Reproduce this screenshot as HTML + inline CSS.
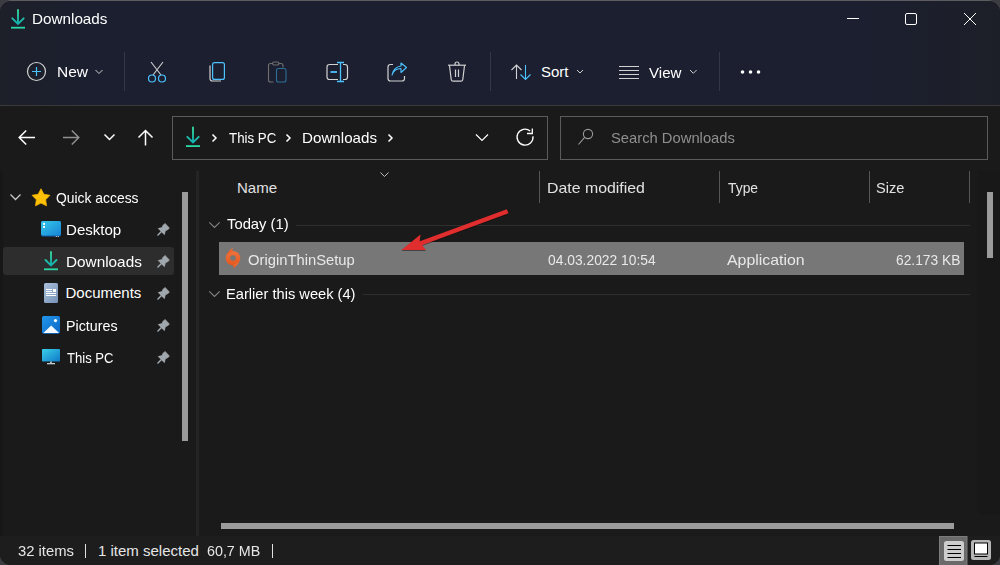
<!DOCTYPE html>
<html><head><meta charset="utf-8">
<style>
*{margin:0;padding:0;box-sizing:border-box}
html,body{width:1000px;height:565px;overflow:hidden;background:#3b3c41}
body{font-family:"Liberation Sans",sans-serif;font-size:15px;color:#fff;position:relative}
.t{position:absolute;white-space:pre;line-height:15px;height:15px;font-size:15px;transform-origin:0 0}
#frame{position:absolute;left:0;top:0;width:1000px;height:565px;border-radius:12px;background:#5d5d61}
#win{position:absolute;left:0;top:1px;width:1000px;height:564px;border-radius:11px;overflow:hidden;background:#1a1a1a}
#cmd{position:absolute;left:0;top:-1px;width:1000px;height:105px;background:linear-gradient(90deg,#1d2029 0%,#1b1f2f 9%,#1b1f30 50%,#1b1f2f 86%,#1d1f28 100%)}
#sep1{position:absolute;left:0;top:104px;width:1000px;height:1px;background:#3a3a3a}
#nav{position:absolute;left:0;top:105px;width:1000px;height:65px;background:#1a1a1a}
.vs{position:absolute;width:1px;background:#3b3f4c}
svg{position:absolute;overflow:visible}
.box{position:absolute;border:1px solid #5b5b5b;background:#1a1a1a}
.hd{color:#e2e2e2}
</style></head><body>
<div id="frame"></div>
<div id="win">
  <div id="cmd"></div>
  <div id="sep1"></div>
  <div id="nav"></div>
  <!-- left dark strip -->
  <div style="position:absolute;left:0;top:170px;width:3px;height:365px;background:#171717"></div>
  <!-- splitter -->
  <div style="position:absolute;left:196px;top:170px;width:3px;height:365px;background:#242424"></div>
  <!-- right scroll track -->
  <div style="position:absolute;left:978px;top:170px;width:22px;height:344px;background:#181818"></div>
  <!-- status bar -->
  <div style="position:absolute;left:0;top:535px;width:1000px;height:30px;background:#1d1d1d"></div>
</div>

<!-- title -->
<svg style="left:0;top:0" width="40" height="40" viewBox="0 0 40 40">
  <defs><linearGradient id="dlg" x1="0" y1="0" x2="0" y2="1"><stop offset="0" stop-color="#36e0a2"/><stop offset="1" stop-color="#12b0b0"/></linearGradient></defs>
  <path d="M18 10V23.8M12.3 18.3L18 24L23.7 18.3" stroke="url(#dlg)" stroke-width="1.8" fill="none" stroke-linecap="round"/>
  <rect x="11" y="26.8" width="14" height="1.8" fill="#2ad8a6"/>
</svg>
<div class="t" style="left:31.50px;top:11px;transform:scaleX(1.017)">Downloads</div>

<!-- window controls -->
<svg style="left:0;top:0" width="1000" height="40">
  <path d="M847 18.5H859" stroke="#fff" stroke-width="1"/>
  <rect x="905.5" y="13.5" width="11" height="11" rx="1.5" stroke="#fff" stroke-width="1" fill="none"/>
  <path d="M964 13L976 25M976 13L964 25" stroke="#fff" stroke-width="1"/>
</svg>

<!-- command bar -->
<svg style="left:0;top:0" width="1000" height="104">
  <!-- New -->
  <circle cx="36.5" cy="71.5" r="9" stroke="#d2d2d2" stroke-width="1.2" fill="none"/>
  <path d="M36.5 67V76M32 71.5H41" stroke="#4cc2ff" stroke-width="1.2"/>
  <path d="M95.5 70L99 73.5L102.5 70" stroke="#cfcfcf" stroke-width="1" fill="none"/>
  <!-- separators -->
  <rect x="124" y="52" width="1" height="39" fill="#343845"/>
  <rect x="490" y="52" width="1" height="39" fill="#343845"/>
  <rect x="719" y="52" width="1" height="39" fill="#343845"/>
  <!-- cut -->
  <path d="M151 62L161 75M163 62L153 75" stroke="#d2d2d2" stroke-width="1.1" fill="none"/>
  <circle cx="152" cy="78.5" r="3.5" stroke="#4cc2ff" stroke-width="1.2" fill="none"/>
  <circle cx="162" cy="78.5" r="3.5" stroke="#4cc2ff" stroke-width="1.2" fill="none"/>
  <!-- copy -->
  <path d="M210 65.5V78.5A2.5 2.5 0 0 0 212.5 81H221" stroke="#d2d2d2" stroke-width="1.2" fill="none"/>
  <rect x="212.6" y="62.6" width="11.8" height="16.8" rx="2" stroke="#4cc2ff" stroke-width="1.2" fill="none"/>
  <!-- paste (disabled) -->
  <path d="M273 63.5H270.5A2 2 0 0 0 268.5 65.5V80A2 2 0 0 0 270.5 82H273.5M278.5 63.5H281A2 2 0 0 1 283 65.5V67.5" stroke="#707070" stroke-width="1.1" fill="none"/>
  <rect x="272.5" y="62" width="6.5" height="3" rx="1.5" stroke="#707070" stroke-width="1.1" fill="none"/>
  <rect x="276.5" y="68.5" width="9.5" height="13.5" rx="2" stroke="#2c6f98" stroke-width="1.1" fill="none"/>
  <!-- rename -->
  <path d="M338 64.5H329.5A2.5 2.5 0 0 0 327 67V77A2.5 2.5 0 0 0 329.5 79.5H338M343 64.5H345A2.5 2.5 0 0 1 347.5 67V77A2.5 2.5 0 0 1 345 79.5H343" stroke="#d2d2d2" stroke-width="1.2" fill="none"/>
  <path d="M340.5 62.5V81.5M337 62.5H344M337 81.5H344" stroke="#4cc2ff" stroke-width="1.3" fill="none"/>
  <path d="M330.5 72H337" stroke="#4cc2ff" stroke-width="1.8"/>
  <!-- share -->
  <path d="M393 64.5H390.5A2.5 2.5 0 0 0 388 67V78.5A2.5 2.5 0 0 0 390.5 81H402A2.5 2.5 0 0 0 404.5 78.5V76" stroke="#d2d2d2" stroke-width="1.2" fill="none"/>
  <path d="M392 75C393.5 70.5 397 68.5 401 68.5V72.5L406.5 67.5L401 63V66C396.5 66.5 392.5 70 392 75Z" stroke="#4cc2ff" stroke-width="1.1" fill="none" stroke-linejoin="round"/>
  <!-- delete -->
  <path d="M448 65.2H466" stroke="#d2d2d2" stroke-width="1.2"/>
  <path d="M455 65V64A2 2 0 0 1 459 64V65" stroke="#d2d2d2" stroke-width="1.2" fill="none"/>
  <path d="M449.5 65.5L451.2 79.5A2 2 0 0 0 453.2 81.2H460.8A2 2 0 0 0 462.8 79.5L464.5 65.5" stroke="#d2d2d2" stroke-width="1.2" fill="none"/>
  <path d="M455.5 69.5V77M458.5 69.5V77" stroke="#d2d2d2" stroke-width="1.2"/>
  <!-- sort -->
  <path d="M516.5 65V79M511.5 70L516.5 65L521.5 70" stroke="#d2d2d2" stroke-width="1.1" fill="none"/>
  <path d="M525.5 65V79.5M520.5 74.5L525.5 79.5L530.5 74.5" stroke="#4cc2ff" stroke-width="1.1" fill="none"/>
  <path d="M577 70L580 73L583 70" stroke="#cfcfcf" stroke-width="1" fill="none"/>
  <!-- view -->
  <path d="M619 66.5H639M619 70.5H639M619 74.5H639M619 78.5H639" stroke="#d2d2d2" stroke-width="1.1"/>
  <path d="M690 70L693.3 73.3L696.6 70" stroke="#cfcfcf" stroke-width="1" fill="none"/>
  <!-- more -->
  <circle cx="742.5" cy="72" r="1.8" fill="#fff"/>
  <circle cx="750.5" cy="72" r="1.8" fill="#fff"/>
  <circle cx="758.5" cy="72" r="1.8" fill="#fff"/>
</svg>
<div class="t" style="left:57.00px;top:64px;transform:scaleX(1.034)">New</div>
<div class="t" style="left:541.00px;top:64px">Sort</div>
<div class="t" style="left:648.50px;top:65px;transform:scaleX(1.007)">View</div>

<!-- nav row -->
<svg style="left:0;top:105px" width="1000" height="65">
  <path d="M19.5 32.5H35M26.2 25.5L19.2 32.5L26.2 39.5" stroke="#fff" stroke-width="1.5" fill="none"/>
  <path d="M63 32.5H78.5M71.8 25.5L78.8 32.5L71.8 39.5" stroke="#909090" stroke-width="1.5" fill="none"/>
  <path d="M104.5 29.5L109.5 34.5L114.5 29.5" stroke="#fff" stroke-width="1.5" fill="none"/>
  <path d="M145.5 26V40.5M138.5 32.5L145.5 25.5L152.5 32.5" stroke="#fff" stroke-width="1.5" fill="none"/>
</svg>
<div class="box" style="left:172px;top:116px;width:376px;height:44px"></div>
<div class="box" style="left:560px;top:116px;width:428px;height:44px"></div>
<svg style="left:0;top:105px" width="1000" height="65">
  <path d="M193 22.5V37.5M187.3 31.8L193 37.5L198.7 31.8" stroke="url(#dlg)" stroke-width="1.8" fill="none" stroke-linecap="round"/>
  <rect x="186" y="40.2" width="14" height="1.8" fill="#2ad8a6"/>
  <path d="M212.5 29.5L216 33L212.5 36.5" stroke="#fff" stroke-width="1.5" fill="none"/>
  <path d="M286.5 29.5L290 33L286.5 36.5" stroke="#fff" stroke-width="1.5" fill="none"/>
  <path d="M388.5 29.5L392 33L388.5 36.5" stroke="#fff" stroke-width="1.5" fill="none"/>
  <path d="M476 29.5L482 35.5L488 29.5" stroke="#fff" stroke-width="1.2" fill="none"/>
  <path d="M533 31.3A8 8 0 1 1 530.1 25.9" stroke="#fff" stroke-width="1.3" fill="none"/>
  <path d="M527 28.5H532.3V23.5" stroke="#fff" stroke-width="1.3" fill="none"/>
  <circle cx="588" cy="29" r="4.6" stroke="#9a9a9a" stroke-width="1.1" fill="none"/>
  <path d="M584.8 32.2L578.5 39.5" stroke="#9a9a9a" stroke-width="1.1"/>
</svg>
<div class="t" style="left:228.50px;top:130px;transform:scaleX(0.887)">This PC</div>
<div class="t" style="left:301.50px;top:130px;transform:scaleX(1.011)">Downloads</div>
<div class="t" style="left:611.00px;top:130px;color:#8f8f8f;transform:scaleX(0.984)">Search Downloads</div>

<!-- nav pane -->
<div style="position:absolute;left:3px;top:247px;width:171px;height:28px;background:#2d2d2d;border-radius:3px"></div>
<div style="position:absolute;left:182px;top:192px;width:6px;height:249px;background:#9b9b9b"></div>
<svg style="left:0;top:0" width="200" height="400">
  <defs>
    <linearGradient id="dsk" x1="0" y1="0" x2="1" y2="1"><stop offset="0" stop-color="#36c8ea"/><stop offset="1" stop-color="#1784d6"/></linearGradient>
    <linearGradient id="doc" x1="0" y1="0" x2="1" y2="1"><stop offset="0" stop-color="#aac0da"/><stop offset="1" stop-color="#7591b6"/></linearGradient>
    <linearGradient id="pic" x1="0" y1="0" x2="1" y2="1"><stop offset="0" stop-color="#2296ea"/><stop offset="1" stop-color="#0b66c8"/></linearGradient>
    <linearGradient id="pc" x1="0" y1="0" x2="1" y2="1"><stop offset="0" stop-color="#3ad0e8"/><stop offset="1" stop-color="#0f78c8"/></linearGradient>
  </defs>
  <path d="M10.5 194.5L15.5 199.5L20.5 194.5" stroke="#c8c8c8" stroke-width="1.3" fill="none"/>
  <path d="M41.00 188.80L43.88 194.24L49.94 195.30L45.66 199.71L46.53 205.80L41.00 203.10L35.47 205.80L36.34 199.71L32.06 195.30L38.12 194.24Z" fill="#ffc107" stroke="#f0b000" stroke-width="0.8" stroke-linejoin="round"/>
  <!-- desktop -->
  <rect x="41" y="221" width="20" height="15.5" rx="1.8" fill="#0f5fae"/>
  <rect x="41" y="221" width="20" height="14.6" rx="1.8" fill="url(#dsk)"/>
  <rect x="43.1" y="223" width="1.9" height="1.9" fill="#fff"/>
  <rect x="43.1" y="226" width="1.9" height="1.9" fill="#fff"/>
  <rect x="55.8" y="236" width="1" height="1" fill="#ddd"/>
  <rect x="57.8" y="236" width="1" height="1" fill="#ddd"/>
  <!-- downloads -->
  <path d="M51 252V265.5M45.5 260L51 265.5L56.5 260" stroke="url(#dlg)" stroke-width="1.8" fill="none" stroke-linecap="round"/>
  <rect x="44" y="268.4" width="14" height="1.8" fill="#2ad8a6"/>
  <!-- documents -->
  <rect x="44" y="283" width="14" height="20" rx="1.5" fill="url(#doc)"/>
  <rect x="46" y="289" width="6" height="1" fill="#fff"/>
  <rect x="46" y="291" width="6" height="1" fill="#fff"/>
  <rect x="46" y="293" width="10" height="1" fill="#fff"/>
  <rect x="46" y="295" width="10" height="1" fill="#fff"/>
  <rect x="53" y="289" width="3" height="3" fill="#fff"/>
  <!-- pictures -->
  <rect x="42" y="316" width="18" height="17.8" rx="1.8" fill="url(#pic)"/>
  <path d="M43.3 333L51.2 325.6L59.1 333Z" fill="#f2f8ff"/>
  <circle cx="55.5" cy="320.6" r="1.6" fill="#fff"/>
  <!-- this pc -->
  <rect x="42" y="349" width="18" height="12.5" rx="0.8" fill="url(#pc)"/>
  <rect x="50" y="361.5" width="2" height="1.5" fill="#aab4bc"/>
  <rect x="47" y="363" width="8" height="1.3" fill="#c4ccd2"/>
</svg>
<svg style="left:0;top:0" width="200" height="400">
  <g id="pin" fill="#a0a8ae" stroke="#a0a8ae" stroke-width="0.9" stroke-linejoin="round" transform="translate(161.2,231.7) rotate(-45)">
    <path d="M0.2 -4.2L3.9 -2L5.4 -3.1H8.4V3.1H5.4L3.9 2L0.2 4.2Z"/>
    <path d="M-4.6 0H0" stroke-width="1.5" stroke-linecap="round"/>
  </g>
  <use href="#pin" y="32"/>
  <use href="#pin" y="64"/>
  <use href="#pin" y="96"/>
  <use href="#pin" y="128"/>
</svg>
<div class="t" style="left:56.00px;top:190px;transform:scaleX(0.925)">Quick access</div>
<div class="t" style="left:66.00px;top:222px;transform:scaleX(1.004)">Desktop</div>
<div class="t" style="left:66.00px;top:254px;transform:scaleX(1.022)">Downloads</div>
<div class="t" style="left:65.50px;top:285px">Documents</div>
<div class="t" style="left:65.50px;top:318px;transform:scaleX(0.951)">Pictures</div>
<div class="t" style="left:66.50px;top:350px;transform:scaleX(0.872)">This PC</div>

<!-- file list -->
<div style="position:absolute;left:539px;top:171px;width:1px;height:32px;background:#565656"></div>
<div style="position:absolute;left:719px;top:171px;width:1px;height:32px;background:#565656"></div>
<div style="position:absolute;left:869px;top:171px;width:1px;height:32px;background:#565656"></div>
<div style="position:absolute;left:969px;top:171px;width:1px;height:32px;background:#565656"></div>
<svg style="left:0;top:0" width="1000" height="320">
  <path d="M380.5 172.5L384.5 176.5L388.5 172.5" stroke="#bdbdbd" stroke-width="1" fill="none"/>
  <path d="M209.3 222.3L214.5 227.5L219.7 222.3" stroke="#858585" stroke-width="1.1" fill="none"/>
  <path d="M209.3 291.3L214.5 296.5L219.7 291.3" stroke="#858585" stroke-width="1.1" fill="none"/>
</svg>
<div style="position:absolute;left:296px;top:225px;width:674px;height:1px;background:#2e2e2e"></div>
<div style="position:absolute;left:363px;top:294px;width:607px;height:1px;background:#2e2e2e"></div>
<div class="t hd" style="left:237.00px;top:180px">Name</div>
<div class="t hd" style="left:547.00px;top:180px;transform:scaleX(1.058)">Date modified</div>
<div class="t hd" style="left:728.00px;top:180px;transform:scaleX(0.925)">Type</div>
<div class="t hd" style="left:876.00px;top:180px;transform:scaleX(0.972)">Size</div>
<div class="t" style="left:227.00px;top:216px;transform:scaleX(0.987)">Today (1)</div>
<div class="t" style="left:226.00px;top:286px;transform:scaleX(0.977)">Earlier this week (4)</div>

<div style="position:absolute;left:219px;top:242px;width:745px;height:33px;background:#777777"></div>
<svg style="left:0;top:0" width="1000" height="320">
  <defs><linearGradient id="org" x1="0" y1="0" x2="0" y2="1"><stop offset="0" stop-color="#f0733f"/><stop offset="1" stop-color="#e5571b"/></linearGradient></defs>
  <g fill="url(#org)">
  <circle cx="233" cy="258.2" r="7.3"/>
  <path d="M226.9 254.3C228.4 251.6 230.4 249.3 232.8 247.8C232.3 249 232.2 250.2 232.9 251.3Z"/>
  <path d="M239.1 262.1C237.6 264.8 235.6 267.1 233.2 268.6C233.7 267.4 233.8 266.2 233.1 265.1Z"/>
  </g>
  <circle cx="233" cy="258" r="2.8" fill="#777777"/>
</svg>
<div class="t" style="left:248.00px;top:252px;color:#e8e8e8;transform:scaleX(0.985)">OriginThinSetup</div>
<div class="t" style="left:548.00px;top:252px;color:#e8e8e8;transform:scaleX(0.922)">04.03.2022 10:54</div>
<div class="t" style="left:727.00px;top:252px;color:#e8e8e8;transform:scaleX(1.058)">Application</div>
<div class="t" style="left:895.50px;top:252px;color:#e8e8e8;transform:scaleX(0.919)">62.173 KB</div>

<!-- red arrow -->
<svg style="left:0;top:0" width="1000" height="320">
  <defs><filter id="sh" x="-10%" y="-10%" width="120%" height="130%"><feDropShadow dx="0" dy="0.8" stdDeviation="0.5" flood-color="#000" flood-opacity="0.55"/></filter></defs>
  <g filter="url(#sh)" fill="#e02d2d">
  <path d="M507.6 211.2L418 244.3" stroke="#e02d2d" stroke-width="4.4" stroke-linecap="butt"/>
  <path d="M401.5 250L420.5 234.5L419.5 242L426 250Z"/>
  </g>
</svg>

<!-- scrollbars -->
<div style="position:absolute;left:987px;top:192px;width:6px;height:66px;background:#9b9b9b"></div>
<div style="position:absolute;left:221px;top:523px;width:733px;height:6px;background:#9b9b9b"></div>

<!-- status bar -->
<div class="t" style="left:17.50px;top:543px;color:#e6e6e6;transform:scaleX(0.986)">32 items</div>
<div style="position:absolute;left:85px;top:544px;width:1px;height:14px;background:#e0e0e0"></div>
<div class="t" style="left:98.00px;top:543px;color:#e6e6e6">1 item selected</div>
<div class="t" style="left:207.00px;top:543px;color:#e6e6e6;transform:scaleX(0.952)">60,7 MB</div>
<div style="position:absolute;left:272px;top:544px;width:1px;height:14px;background:#e0e0e0"></div>
<svg style="left:0;top:0" width="1000" height="565">
  <rect x="939.5" y="536.5" width="27.5" height="30" fill="#6a6a6a" stroke="#7c7c7c" stroke-width="1"/>
  <rect x="944" y="541" width="20" height="20" rx="2.5" fill="#cdcdcd"/>
  <path d="M947.5 545.5H961M947.5 549.5H961M947.5 553.5H961M947.5 557.5H961" stroke="#000" stroke-width="1"/>
  <rect x="971" y="540" width="20" height="20" rx="2.5" fill="#b5b5b5"/>
  <rect x="974.5" y="543" width="13" height="11" fill="#fff" stroke="#000" stroke-width="1"/>
  <path d="M974.5 556.5H987.5" stroke="#000" stroke-width="1"/>
</svg>
</body></html>
